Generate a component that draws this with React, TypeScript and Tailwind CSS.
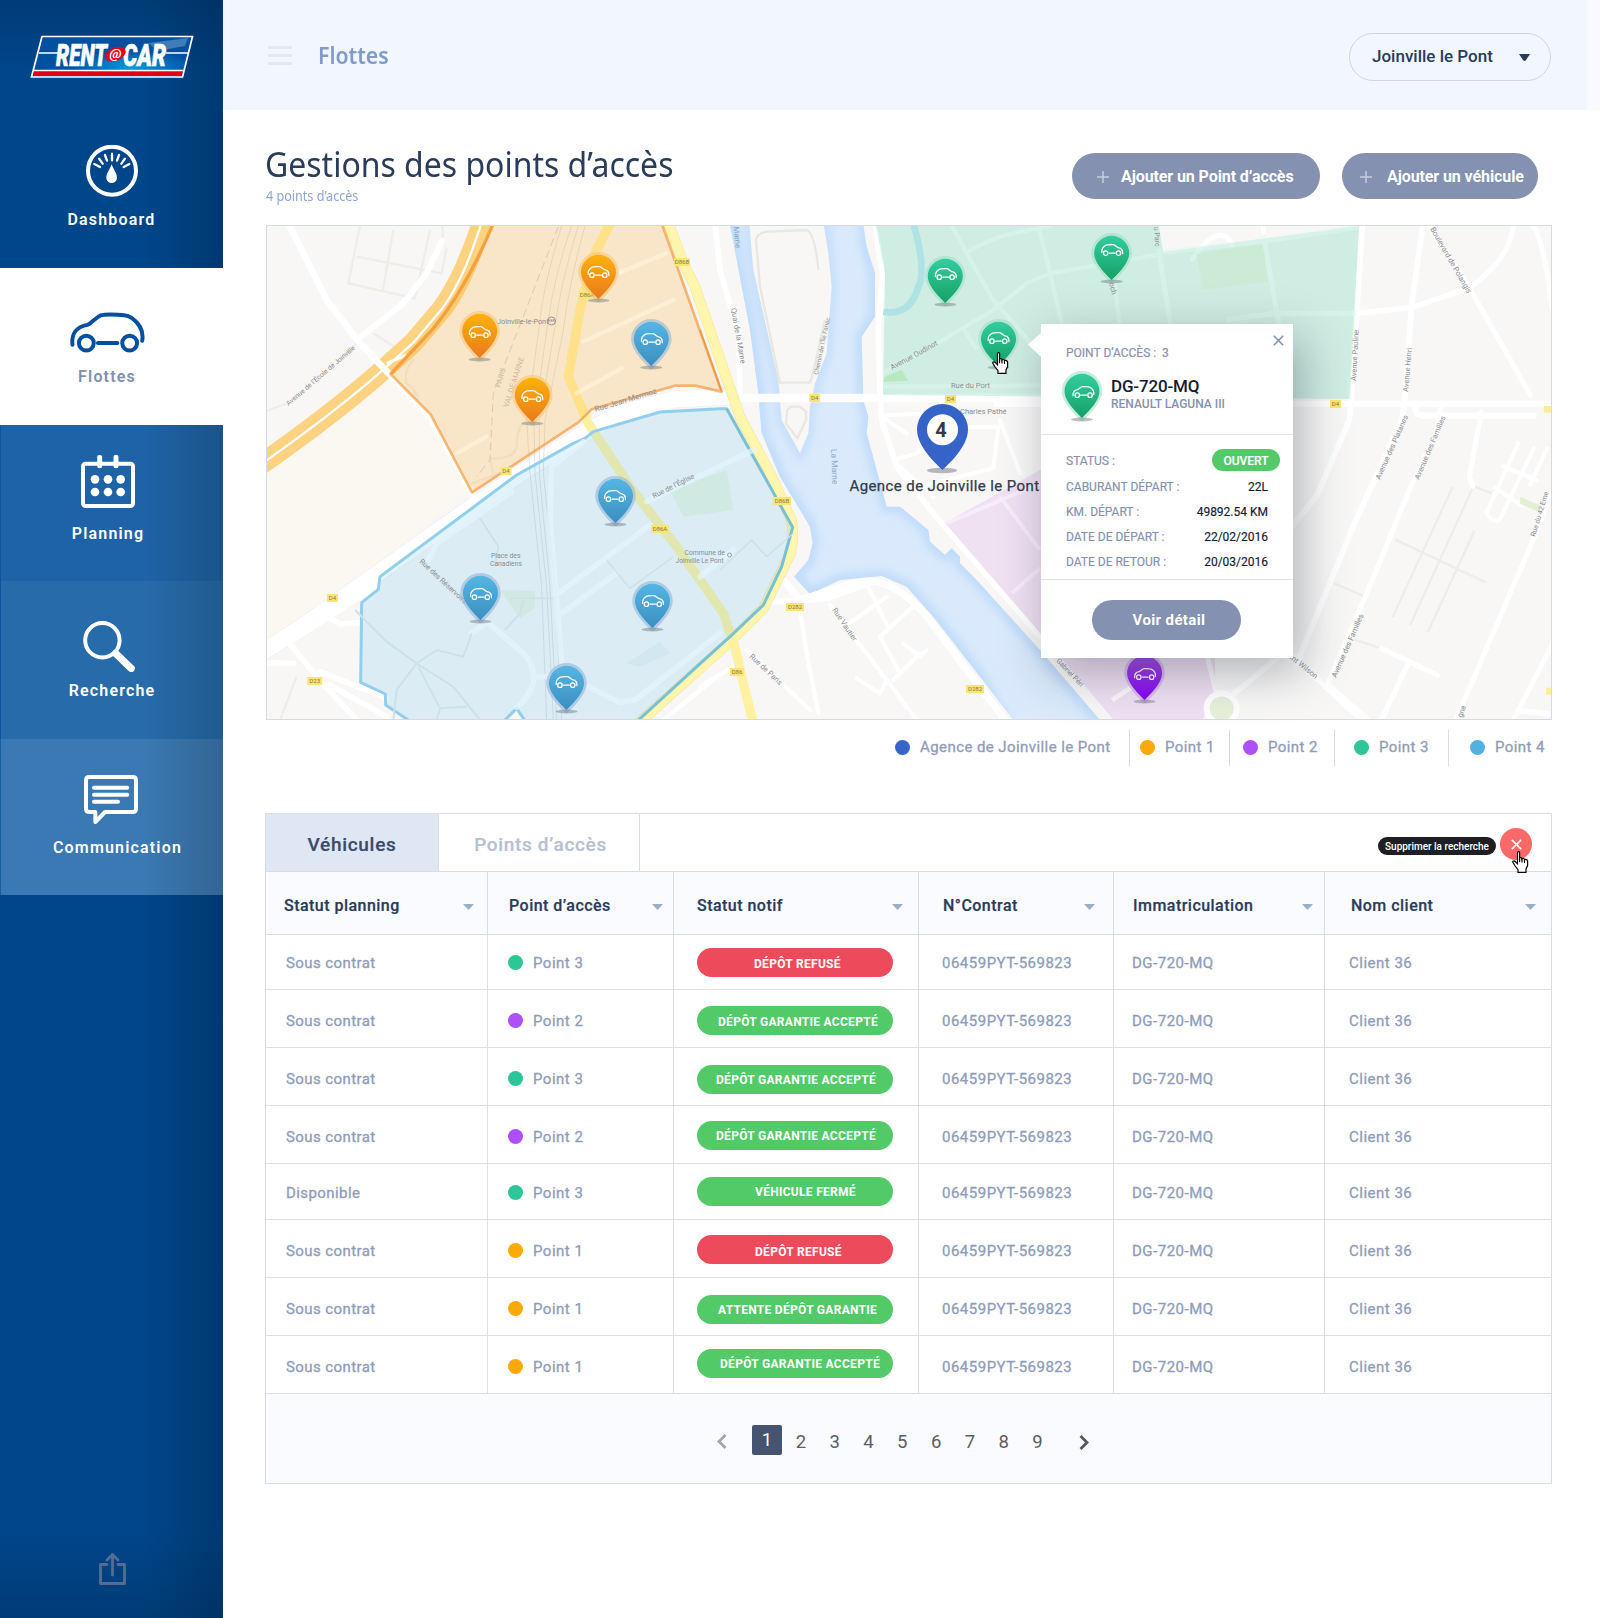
import type { ReactNode } from "react";

/* ---------- icons ---------- */

function CarShape({ color, width = 12 }: { color: string; width?: number }) {
  return (
    <g fill="none" stroke={color} strokeWidth={width} strokeLinecap="round" strokeLinejoin="round">
      <path d="M217 1033C214 1004 226 979 262 973Q268 971 273 966L294 949Q302 942 313 942Q350 941 374 944Q386 945 396 952C421 970 433 990 428 1021" />
      <circle cx="259" cy="1028" r="22.5" />
      <circle cx="390" cy="1028" r="22.5" />
      <path d="M294 1028H353" />
    </g>
  );
}

function Gauge() {
  return (
    <svg className="h-[52px] w-[52px]" viewBox="258 434 156 156" fill="none">
      <circle cx="336" cy="511" r="72" stroke="#fff" strokeWidth="12" />
      <g stroke="#fff" strokeWidth="7" strokeLinecap="round">
        <path d="M336 460v20M315 464l6 17M357 464l-6 17M297 475l11 15M375 475l-11 15M283 491l17 9M388 491l-17 9" />
      </g>
      <path d="M335 492C340 507 351 519 351 532A16 16 0 0 1 319 532C319 519 330 507 335 492Z" fill="#fff" />
    </svg>
  );
}

function Calendar() {
  return (
    <svg className="h-[53px] w-[54px]" viewBox="243 105 162 159" fill="none">
      <rect x="249" y="131" width="150" height="127" rx="8" stroke="#fff" strokeWidth="12" />
      <path d="M299 112V137M348 112V137" stroke="#fff" strokeWidth="15" strokeLinecap="round" />
      <g fill="#fff">
        <circle cx="285" cy="178" r="13" /><circle cx="324" cy="178" r="13" /><circle cx="362" cy="178" r="13" />
        <circle cx="285" cy="216" r="13" /><circle cx="324" cy="216" r="13" /><circle cx="362" cy="216" r="13" />
      </g>
    </svg>
  );
}

function Magnifier() {
  return (
    <svg className="mr-[6px] h-[51px] w-[52px]" viewBox="249 602 156 154" fill="none">
      <circle cx="307" cy="660" r="52" stroke="#fff" strokeWidth="12" />
      <path d="M347 700L394 745" stroke="#fff" strokeWidth="22" strokeLinecap="round" />
    </svg>
  );
}

function Message() {
  return (
    <svg className="mr-[14px] h-[49px] w-[54px]" viewBox="252 1065 162 147" fill="none" stroke="#fff" strokeWidth="12" strokeLinejoin="round" strokeLinecap="round">
      <path d="M268 1071H398Q408 1071 408 1081V1166Q408 1176 398 1176H315L286 1206V1176H268Q258 1176 258 1166V1081Q258 1071 268 1071Z" />
      <path d="M282 1103H382M282 1124H382M282 1145H354" />
    </svg>
  );
}

function Hand({ className }: { className: string }) {
  return (
    <svg className={className} viewBox="0 0 17 22">
      <path
        d="M5.5 1.5Q5.5 .6 6.5 .6T7.6 1.5V7.2Q8 6.4 9 6.6T10 8Q10.4 7.3 11.4 7.5T12.5 8.8Q12.9 8.2 13.9 8.4T15.6 10V14.5L14 18V21.3H6V18.6L2.8 14.5L.8 11.3Q.7 9.8 2 9.8Q3.2 10 4.2 11.3L5.5 12.7Z"
        fill="#fff" stroke="#000" strokeWidth="1.2"
      />
      <path d="M7.6 7V11.2M10 8V11.6M12.5 9V12" stroke="#000" strokeWidth="1.1" />
    </svg>
  );
}

function Logo() {
  return (
    <svg className="h-[44px] w-[165px]" viewBox="0 0 165 44">
      <defs>
        <radialGradient id="lg" cx=".62" cy=".75" r=".4">
          <stop offset="0" stopColor="#0a9ad8" />
          <stop offset="1" stopColor="#0050a0" />
        </radialGradient>
      </defs>
      <path d="M12 1.5H162.500L152.500 42H1.500Z" fill="url(#lg)" stroke="#fff" strokeWidth="1.7" />
      <path d="M118 8L158 3L155 11L128 16Z" fill="#fff" opacity=".25" />
      <path d="M4 36.500H152.700L151.500 41H3Z" fill="#e2001a" />
      <path d="M4 35.5H153.500" stroke="#fff" strokeWidth="1.300" />
      <path d="M9 18H29M136 18H158" stroke="#fff" strokeWidth="1.600" />
      <g fill="#fff" stroke="#fff" strokeWidth=".7" fontFamily="Roboto, sans-serif" fontWeight="900" fontStyle="italic" fontSize="32">
        <text x="26" y="31" textLength="51" lengthAdjust="spacingAndGlyphs">RENT</text>
        <text x="93" y="31" textLength="43" lengthAdjust="spacingAndGlyphs">CAR</text>
      </g>
      <ellipse cx="85.300" cy="19" rx="11" ry="6.500" fill="#e2001a" transform="rotate(-22 85.300 19)" />
      <text x="79.500" y="22.700" fill="#fff" fontFamily="Roboto, sans-serif" fontStyle="italic" fontWeight="700" fontSize="13" textLength="12" lengthAdjust="spacingAndGlyphs">@</text>
    </svg>
  );
}

/* ---------- map markers ---------- */

const PIN = "M0 44C-3.500 40.500-17.500 28-17.500 17.300A17.500 17.500 0 0 1 17.500 17.300C17.500 28 3.500 40.500 0 44Z";

const PIN_COLORS: Record<string, { fill: string; halo: string }> = {
  orange: { fill: "url(#pinOrange)", halo: "#f6c878" },
  blue: { fill: "url(#pinBlue)", halo: "#94b8dc" },
  green: { fill: "url(#pinGreen)", halo: "#9fe3c9" },
  purple: { fill: "url(#pinPurple)", halo: "#c9a4ea" },
};

function PinDefs() {
  const g = (id: string, a: string, b: string) => (
    <linearGradient id={id} x1="0" y1="0" x2="0" y2="1">
      <stop offset="0" stopColor={a} />
      <stop offset="1" stopColor={b} />
    </linearGradient>
  );
  return (
    <defs>
      {g("pinOrange", "#fdb10c", "#e97a1b")}
      {g("pinBlue", "#55b6e3", "#3b8fc0")}
      {g("pinGreen", "#33cda0", "#16a067")}
      {g("pinPurple", "#a24fe0", "#8500f5")}
    </defs>
  );
}

function Pin({ x, y, kind, dx = 0, dy = 17, flip = true }: { x: number; y: number; kind: string; dx?: number; dy?: number; flip?: boolean }) {
  const c = PIN_COLORS[kind];
  return (
    <g transform={`translate(${x} ${y})`}>
      <path d={PIN} fill={c.halo} stroke={c.halo} strokeWidth="5.500" strokeLinejoin="round" opacity=".6" />
      <ellipse cx="0" cy="45.500" rx="11" ry="1.900" fill="#6f7480" opacity=".45" />
      <path d={PIN} fill={c.fill} />
      <g transform={`translate(${dx} ${dy}) scale(${flip ? -0.098 : 0.098} .098) translate(-323 -996)`}>
        <CarShape color="#fff" width={13} />
      </g>
    </g>
  );
}

const PINS: { x: number; y: number; kind: string; dx?: number; dy?: number; flip?: boolean }[] = [
  { x: 598.5, y: 255, kind: "orange" },
  { x: 479.7, y: 314, kind: "orange", dy: 18 },
  { x: 532.3, y: 378, kind: "orange", dy: 18 },
  { x: 651.3, y: 322, kind: "blue", dx: 0.5 },
  { x: 615.5, y: 479, kind: "blue", dx: -0.5 },
  { x: 480.5, y: 576, kind: "blue", dx: 0.5, dy: 18 },
  { x: 652.5, y: 584, kind: "blue", dx: 0.5 },
  { x: 566.5, y: 666, kind: "blue", dy: 16 },
  { x: 945.3, y: 259, kind: "green", dx: 0.5, dy: 15 },
  { x: 998.5, y: 322, kind: "green", dy: 16 },
  { x: 1111.7, y: 236, kind: "green", dx: 0.5, dy: 14 },
  { x: 1144.6, y: 656, kind: "purple", dx: 0.5, dy: 18, flip: false },
];

/* ---------- map ---------- */

const WEST = "translate(260 220) scale(.33333)";
const CENTER = "translate(700 220) scale(.33333)";
const EAST = "translate(1030 220) scale(.338 .357)";

function Shield({ x, y, children, w = 16 }: { x: number; y: number; children: string; w?: number }) {
  return (
    <g>
      <rect x={x - w / 2} y={y - 4} width={w} height="8" fill="#fbe572" />
      <text x={x} y={y + 2.3} textAnchor="middle" fontSize="6" fill="#857a4c">{children}</text>
    </g>
  );
}

function Label({ x, y, r = 0, size = 8, color = "#8b8d90", children }: { x: number; y: number; r?: number; size?: number; color?: string; children: string }) {
  return (
    <text x={x} y={y} fontSize={size} fill={color} transform={`rotate(${r} ${x} ${y})`}>{children}</text>
  );
}

function MapCanvas() {
  return (
    <svg className="block h-full w-full" viewBox="267 226 1284 493" fontFamily="Roboto, sans-serif" fill="none">
      <PinDefs />
      <defs>
        <filter id="soft" x="-10%" y="-10%" width="120%" height="120%">
          <feGaussianBlur stdDeviation="14" />
        </filter>
        <clipPath id="riverClip">
          <path d="M90 16L110 120L150 330L175 520L185 640L240 770L330 920L338 970L325 1020L282 1070L330 1122L420 1080L545 1068L620 1100L700 1190L840 1370L940 1500H1200L1020 1290L830 1080L780 1030V1010L755 985L735 1005L690 965L685 930L600 860H560L500 640L505 590L490 540L485 350L525 290V160L500 80L490 16Z" />
        </clipPath>
      </defs>
      <rect x="267" y="226" width="1284" height="493" fill="#f8f7f6" />
      <path d="M267 470L400 375L470 490L330 600L267 640Z" fill="#fbf8f2" />

      {/* river */}
      <g transform={CENTER}>
        <path d="M90 16L110 120L150 330L175 520L185 640L240 770L330 920L338 970L325 1020L282 1070L330 1122L420 1080L545 1068L620 1100L700 1190L840 1370L940 1500H1200L1020 1290L830 1080L780 1030V1010L755 985L735 1005L690 965L685 930L600 860H560L500 640L505 590L490 540L485 350L525 290V160L500 80L490 16Z" fill="#daeafc" />
        <g clipPath="url(#riverClip)">
          <path d="M90 -40L110 120L150 330L175 520L185 640L240 770L330 920L338 970L325 1020L282 1070L330 1122L420 1080L545 1068L620 1100L700 1190L840 1370L940 1560H1250L1020 1290L830 1080L780 1030V1010L755 985L735 1005L690 965L685 930L600 860H560L500 640L505 590L490 540L485 350L525 290V160L500 80L490 -40Z" stroke="#bedafa" strokeWidth="34" filter="url(#soft)" />
          <path d="M148 -40L160 150L185 260L235 480L245 600L300 700L325 640L330 560L345 490L380 400L385 330L395 200L385 100L370 -40" stroke="#c4defa" strokeWidth="30" filter="url(#soft)" />
        </g>
        <path d="M148 10L160 150L185 260L235 480L245 600L300 700L325 640L330 560L345 490L380 400L385 330L395 200L385 100L370 10Z" fill="#f8f7f5" />
        <path d="M168 60L180 200L240 488H330L340 455L375 300M168 60Q170 40 200 35L320 30Q345 40 355 150M262 570L258 610L292 655L318 600V575L300 560H272Z" stroke="#e9e7e1" strokeWidth="7" />
      </g>

      {/* narrow grey paths */}
      <g stroke="#eeede8" strokeWidth="7">
        <g transform={WEST}>
          <path d="M300 16L265 190L465 235L510 30M290 110L545 160L560 85M400 30L368 215M548 16V60M20 573L80 550M260 400L290 370M340 340L440 405M110 1370L60 1500" />
          <path d="M440 405L460 420Q430 450 440 490Q470 510 475 540M800 600Q770 620 770 680Q760 720 690 715L700 760M635 790L720 760" />
        </g>
        <g transform={EAST}>
          <path d="M1250 748L1073 1112M1310 750L1125 1134M1315 870L1177 1155M1080 895L1348 1015M900 1018L985 1052M958 1175L1040 1200M1310 745L1365 765" />
        </g>
      </g>

      {/* white roads */}
      <g stroke="#fff" strokeLinecap="round" strokeLinejoin="round">
        <g transform={WEST}>
          <path d="M10 1295L120 1225L640 858L800 748L960 648L1080 580L1240 538L1400 530" stroke="#f3f1ee" strokeWidth="54" />
          <path d="M10 1295L120 1225L640 858L800 748L960 648L1080 580L1240 538L1400 530" strokeWidth="49" />
          <path d="M85 10L200 240L300 370L510 590L636 820" strokeWidth="20" />
          <path d="M546 62L500 160L430 250L300 352" strokeWidth="18" />
          <path d="M0 1328L100 1330M80 1260L170 1370L290 1500M100 1260L345 1100M200 1190L240 1212L300 1207M180 1355L380 1435M210 1395L380 1490" strokeWidth="17" />
          <path d="M1370 1370L1210 1500" strokeWidth="14" />
        </g>
        <g transform={CENTER}>
          <path d="M45 10L60 150L115 340L120 520" strokeWidth="17" />
          <path d="M80 534H1030" strokeWidth="26" />
          <path d="M525 16L548 160L535 330L540 520L545 600L590 740L700 880L1020 1250" strokeWidth="17" />
          <path d="M250 1080L300 1140L460 1090Q530 1070 590 1110Q660 1150 740 1270L915 1500" strokeWidth="22" />
          <path d="M200 1145L300 1142L380 1135L520 1085" strokeWidth="18" />
          <path d="M300 1170L320 1300L355 1480M390 1155L560 1380L650 1500M140 1290L330 1470M0 1400L100 1340M560 1130L440 1215M500 1090L560 1215M650 1150L540 1250L600 1360M580 1380L660 1300" strokeWidth="13" />
          <path d="M545 620L560 585L720 580M580 720L650 700L740 600M660 800L880 745L895 620H800M600 740L700 830M900 600L960 760M560 600L620 640" strokeWidth="12" />
          <path d="M470 1375L540 1420L560 1380M610 1270L660 1310L680 1290" strokeWidth="12" />
        </g>
        <g transform={EAST}>
          <path d="M-100 515H1545M1140 530Q1140 548 1170 548H1490" strokeWidth="18" />
          <path d="M983 16L960 350L950 510L945 560L850 770L740 900" strokeWidth="17" />
          <path d="M1162 16L1130 230L1108 510L1100 560L960 850L790 1240" strokeWidth="17" />
          <path d="M1215 530L1200 600L1130 740L990 1060L880 1300M1180 16L1300 190L1480 490M1430 16Q1420 110 1300 190L1130 245L960 262M1490 16Q1520 60 1545 250" strokeWidth="15" />
          <path d="M1335 540L1300 720L1310 745M1545 760L1500 870L1260 1400M740 1190L980 1400M880 1300L1000 1400M1120 1240L1040 1400M1040 1200L1205 1275M1545 1190L1430 1400M1450 1375L1545 1385" strokeWidth="15" />
          <path d="M740 1220L600 1330" strokeWidth="16" />
          <path d="M1445 625L1350 820Q1370 850 1390 840L1490 640M1400 690L1500 730M1375 750L1455 800M1530 640L1480 740" strokeWidth="12" />
          <path d="M480 110Q560 0 600 70M690 16V40" strokeWidth="14" />
        </g>
      </g>
      <g transform={EAST}>
        <path d="M1450 775L1510 800L1500 815L1450 795Z" fill="#e3f0d3" />
        <path d="M1520 530H1545M1536 1310V1330" stroke="#fdec9a" strokeWidth="18" />
      </g>

      {/* railway */}
      <g transform={WEST} stroke="#dcdcd8" strokeWidth="2.500">
        <path d="M905 16Q850 200 840 300L800 600L810 760L845 1100L860 1500M935 16Q880 180 865 300L822 600L825 760L860 1100L880 1500M955 16Q900 200 885 320L838 600V760L870 1100L890 1500M975 16Q925 200 910 330L855 600L850 760L885 1100L905 1500" />
        <path d="M895 20L700 520L690 720L650 770" stroke="#cbc9c4" strokeDasharray="24 14" />
      </g>

      {/* motorway and departmental roads */}
      <g transform={WEST} strokeLinejoin="round">
        <path d="M0 735C150 630 290 520 380 440L460 368L545 268C610 180 640 80 672 0" stroke="#fdd281" strokeWidth="62" />
        <path d="M0 735C150 630 290 520 380 440L460 368L545 268C610 180 640 80 668 0" stroke="#fff" strokeWidth="7" />
        <path d="M200 240L300 370L510 590" stroke="#fff" strokeWidth="20" />
        <path d="M440 405L380 430" stroke="#fff" strokeWidth="9" />
        <path d="M1222 0L1270 130L1305 200L1410 505L1440 590L1535 770L1594 900Q1604 940 1592 1000L1510 1165L1410 1265L1135 1510" stroke="#f5e79b" strokeWidth="32" />
        <path d="M1222 0L1270 130L1305 200L1410 505L1440 590L1535 770L1594 900Q1604 940 1592 1000L1510 1165L1410 1265L1135 1510" stroke="#fff5ad" strokeWidth="28" />
        <path d="M1055 0L1000 110L960 270L925 470L985 610L1110 800L1250 980L1390 1180L1425 1280L1450 1390L1480 1510" stroke="#fff1a0" strokeWidth="28" />
      </g>

      {/* orange zone */}
      <g transform={WEST}>
        <path d="M700 10C650 130 590 240 520 325L392 462L512 583L636 817L955 607L995 568L1245 497H1305L1385 515L1205 10Z" fill="#fbb64a" fillOpacity=".27" stroke="#f4a04c" strokeOpacity=".75" strokeWidth="8" strokeLinejoin="round" />
        <path d="M700 10C650 130 590 240 520 325L392 462" stroke="#f29b33" strokeOpacity=".7" strokeWidth="10" />
        <g stroke="#fff3dd" strokeOpacity=".6" strokeWidth="14" strokeLinecap="round">
          <path d="M1060 165L1220 100M970 365L1240 240M950 520L1085 445M590 700L680 650" />
        </g>
        <path d="M1385 515L1320 330" stroke="#ef9a42" strokeWidth="5" />
      </g>

      {/* blue zone */}
      <g transform={WEST}>
        <path d="M1400 566H1380L1200 576L1000 635L975 655L940 670L770 765L360 1070L355 1108L305 1148L302 1387L376 1422L377 1455L460 1510H725L770 1465L800 1510H1125L1320 1330L1410 1250L1510 1155L1565 1040L1598 922Z" fill="#5fc0ee" fillOpacity=".19" stroke="#92cfec" strokeWidth="9" strokeLinejoin="round" />
        <path d="M1400 566L1598 922L1565 1040L1510 1155L1410 1250L1130 1505" stroke="#6db9c0" strokeOpacity=".65" strokeWidth="8" />
        <path d="M720 1110L825 1113V1165L780 1195Z M1230 810L1400 750L1420 870L1270 890Z" fill="#c9e8d6" fillOpacity=".55" />
        <g stroke="#e6f5fd" strokeOpacity=".7" strokeWidth="17" strokeLinecap="round">
          <path d="M755 815L530 970L505 1020M970 665L875 740L870 900L905 1325M895 1120L1170 915M1160 845L1480 690M635 1240L680 1205L790 1300Q820 1330 822 1380Q810 1430 770 1462M835 1370H870M985 1400L1080 1448L1125 1440L1380 1240M905 1180L1070 1060M1320 1070L1420 990" />
        </g>
        <g stroke="#cde1e7" strokeWidth="6">
          <path d="M660 895L715 980L705 1040M285 1170L380 1265L470 1330L580 1400L660 1500M470 1330L530 1290L610 1310L635 1240M470 1330L410 1410L400 1500M540 1465L530 1500M540 1465L620 1460M540 1465L475 1340M750 1135H880M790 1140L780 1180L735 1230" />
          <path d="M1040 1020L1110 1105L1240 1010M1380 1050L1475 960L1520 1010L1600 940" strokeWidth="4" />
        </g>
        <path d="M1100 1330L1200 1265L1230 1300L1140 1340Z" fill="#d2e7f0" />
      </g>

      {/* green zone */}
      <path d="M875 220L885 273L883 395L1350 399L1359 226L1163 252L1158 220Z" fill="#3fcf9f" fillOpacity=".22" />
      <g transform={CENTER}>
        <path d="M640 10Q680 150 655 200Q630 290 550 275" stroke="#aee2e4" strokeWidth="20" />
        <path d="M555 470L605 450L625 482L550 485Z" fill="#b8e8be" />
        <g stroke="#e0f9ef" strokeOpacity=".5" strokeWidth="13">
          <path d="M548 460L720 365L880 270L980 190L1050 160L1370 105M755 16L800 100L880 240L1010 390M795 100Q880 50 940 40L1060 16M1015 16L1050 160L1085 310M550 500L1030 496M1190 100L1240 150L1258 310M790 325L830 390" />
        </g>
      </g>
      <g transform={EAST}>
        <path d="M492 95L690 65L705 172L512 195Z" fill="#c5e8c8" fillOpacity=".45" />
        <g stroke="#e0f9ef" strokeOpacity=".5" strokeWidth="15">
          <path d="M395 90L690 60L970 20M690 40L730 260L740 300M380 80L415 290M580 280L720 262H965" />
        </g>
      </g>

      {/* purple zone */}
      <path d="M945 523L1040 470L1215 640V690L1203 719H1113L1040 633Z" fill="#b95fe0" fillOpacity=".15" />
      <g transform={CENTER} stroke="#faf1fd" strokeOpacity=".7" strokeWidth="12">
        <path d="M735 912L1020 790M900 830L1020 990M935 1120L1020 1045" />
      </g>
      <path d="M1207 655L1216 692M1112 700L1135 685" stroke="#fbf7fd" strokeWidth="5" />
      <circle cx="1221.700" cy="708.500" r="15" fill="#e7f0da" stroke="#fff" strokeWidth="6" />

      <Shield x={682} y={262} w={16}>D86B</Shield>
      <Shield x={587} y={295} w={16}>D86A</Shield>
      <Shield x={506} y={471} w={11}>D4</Shield>
      <Shield x={332.500} y={598} w={11}>D4</Shield>
      <Shield x={314.700} y={681} w={15}>D23</Shield>
      <Shield x={660} y={529} w={18}>D86A</Shield>
      <Shield x={782} y={501} w={18}>D86B</Shield>
      <Shield x={814.700} y={398} w={11}>D4</Shield>
      <Shield x={950.500} y={399} w={11}>D4</Shield>
      <Shield x={1335.500} y={404} w={11}>D4</Shield>
      <Shield x={795} y={607} w={18}>D282</Shield>
      <Shield x={737} y={672} w={14}>D86</Shield>
      <Shield x={975} y={689} w={18}>D282</Shield>

      <Label x={288.500} y={406} r={-40.500} size={6.800}>Avenue de l’École de Joinville</Label>
      <Label x={497} y={323.500} size={7.300}>Joinville-le-Pont</Label>
      <circle cx="551.500" cy="321" r="4" stroke="#9b8f93" />
      <text x="551.500" y="322.300" textAnchor="middle" fontSize="3.500" fill="#8b7a80">RER</text>
      <Label x={500} y={388} r={-73} size={7.500} color="#cdbd9e">PARIS</Label>
      <Label x={508} y={408} r={-72} size={7.500} color="#cdbd9e">VAL-DE-MARNE</Label>
      <Label x={595.500} y={412} r={-17} size={8}>Rue Jean Mermoz</Label>
      <Label x={654} y={498.500} r={-27} size={7.200}>Rue de l’Église</Label>
      <Label x={419} y={562} r={43} size={7.300}>Rue des Réservoirs</Label>
      <Label x={491} y={558} size={6.800}>Place des</Label>
      <Label x={490} y={565.800} size={6.800}>Canadiens</Label>
      <Label x={684.500} y={554.500} size={6.800}>Commune de</Label>
      <Label x={675.500} y={562.500} size={6.600}>Joinville Le Pont</Label>
      <circle cx="729.500" cy="555" r="2" stroke="#8b8d90" strokeWidth=".8" />
      <Label x={733.500} y={227} r={84} size={7.500} color="#84a0bd">Marne</Label>
      <Label x={731} y={308.500} r={80} size={7.500}>Quai de la Marne</Label>
      <Label x={818} y={375} r={-78} size={6.200}>Chemin de l’Île Fanac</Label>
      <Label x={831} y={449} r={88} size={8.500} color="#8dabca">La Marne</Label>
      <Label x={892} y={370} r={-28.500} size={7.500}>Avenue Oudinot</Label>
      <Label x={951} y={388} size={7.500}>Rue du Port</Label>
      <Label x={960} y={414} size={7.500}>Charles Pathé</Label>
      <Label x={832} y={610} r={56} size={7.500}>Rue Vautier</Label>
      <Label x={749} y={657} r={43} size={7.500}>Rue de Paris</Label>
      <Label x={1056} y={661} r={47} size={7}>Gabriel Péri</Label>
      <Label x={1154} y={227} r={86} size={7}>u Parc</Label>
      <Label x={1109} y={283} r={75} size={7.500}>och</Label>
      <Label x={1430} y={229} r={60} size={7.600}>Boulevard de Polangis</Label>
      <Label x={1356} y={381} r={-87} size={7.500}>Avenue Pauline</Label>
      <Label x={1408} y={392} r={-85} size={7.500}>Avenue Henri</Label>
      <Label x={1380} y={480} r={-66} size={7.500}>Avenue des Platanes</Label>
      <Label x={1419} y={480} r={-67} size={7.500}>Avenue des Familles</Label>
      <Label x={1336} y={678} r={-66} size={7.500}>Avenue des Familles</Label>
      <Label x={1535} y={537} r={-73} size={7}>Rue du 42 Eme</Label>
      <Label x={1288} y={657} r={39} size={7.500}>ent Wilson</Label>
      <Label x={1462} y={718} r={-70} size={7.500}>gne</Label>

      {PINS.map((p) => (
        <Pin key={`${p.x}-${p.y}`} {...p} />
      ))}

      {/* agency marker */}
      <g>
        <ellipse cx="942" cy="470.500" rx="15" ry="2.700" fill="#7d828c" opacity=".55" />
        <path d="M942.500 470C937 464.500 917 447 917 429.500A25.500 25.500 0 0 1 968 429.500C968 447 948 464.500 942.500 470Z" fill="#3663c8" />
        <circle cx="942.500" cy="429.700" r="15.500" fill="#fff" />
        <text x="941" y="436.500" textAnchor="middle" fontSize="20" fontWeight="700" fill="#343a45">4</text>
        <text x="849.500" y="491" fontSize="15" letterSpacing=".4" fill="#333a48" stroke="#333a48" strokeWidth=".25">Agence de Joinville le Pont</text>
      </g>
    </svg>
  );
}

function Detail({ label, value, className }: { label: string; value: ReactNode; className: string }) {
  return (
    <div className={`flex items-center justify-between pl-[25px] text-[12px] leading-4 ${className}`}>
      <span className="whitespace-pre text-[#8491b0] [-webkit-text-stroke:0.15px]">{label}</span>
      <span className="text-[#131b33] [-webkit-text-stroke:0.15px]">{value}</span>
    </div>
  );
}

function VehiclePopup() {
  return (
    <div className="absolute left-[774px] top-[98px] h-[334px] w-[252px] bg-white shadow-[8px_14px_44px_rgba(30,40,60,0.34)]">
      <svg className="absolute -left-[13px] top-[9px] h-6 w-[13px]" viewBox="0 0 13 24">
        <path d="M13 0L0 11.500L13 24Z" fill="#fff" />
      </svg>
      <svg className="absolute right-[9px] top-[11px] h-[11px] w-[11px]" viewBox="0 0 11 11">
        <path d="M.8 .8L10.200 10.200M10.200 .8L.8 10.200" stroke="#8491b0" strokeWidth="1.600" />
      </svg>
      <div className="h-[111px] border-b border-[#e3e5ec] pl-[25px] pt-[21px]">
        <p className="whitespace-pre text-[12px] leading-4 text-[#8491b0] [-webkit-text-stroke:0.15px]">POINT D’ACCÈS :  3</p>
        <div className="-ml-[6px] mt-[9px] flex">
          <svg className="h-[52px] w-11" viewBox="-22 -4 44 52">
            <Pin x={0} y={0} kind="green" dx={1.500} dy={18} flip={false} />
          </svg>
          <div className="ml-[7px] pt-[6px]">
            <h3 className="text-[17px] font-medium leading-[21px] tracking-[-0.16px] text-[#131b33]">DG-720-MQ</h3>
            <p className="text-[12px] font-medium leading-[14px] text-[#8491b0]">RENAULT LAGUNA III</p>
          </div>
        </div>
      </div>
      <div className="h-[145px] border-b border-[#dfe1e8] pt-[14px]">
        <Detail
          className="h-[24px] pr-[13px]"
          label="STATUS :"
          value={<span className="mb-[2px] flex h-[22px] w-[68px] items-center justify-center rounded-full bg-[#52ca68] pt-px font-medium text-white">OUVERT</span>}
        />
        <Detail className="mt-[6px] pr-[25px]" label="CABURANT DÉPART :" value="22L" />
        <Detail className="mt-[9px] pr-[25px]" label="KM. DÉPART :" value="49892.54 KM" />
        <Detail className="mt-[9px] pr-[25px]" label="DATE DE DÉPART :" value="22/02/2016" />
        <Detail className="mt-[9px] pr-[25px]" label="DATE DE RETOUR :" value="20/03/2016" />
      </div>
      <button className="ml-[51px] mt-5 flex h-10 w-[149px] items-center justify-center rounded-full bg-[#8491b0] pl-[5px] text-[15px] font-bold tracking-[0.38px] text-white">
        Voir détail
      </button>
    </div>
  );
}

/* ---------- sidebar ---------- */

function NavItem({ className, label, children }: { className: string; label: string; children: ReactNode }) {
  return (
    <a className={`flex flex-col items-center justify-end text-[16px] font-semibold leading-5 tracking-[1.17px] ${className}`}>
      {children}
      <span>{label}</span>
    </a>
  );
}

function Sidebar() {
  return (
    <aside className="flex h-[1618px] w-[223px] shrink-0 flex-col bg-[#00468b] bg-[linear-gradient(180deg,rgba(0,35,70,0.3),rgba(0,35,70,0)_70px,rgba(0,35,70,0)_1530px,rgba(0,35,70,0.3)),linear-gradient(90deg,rgba(0,35,70,0)_65%,rgba(0,35,70,0.38))]">
      <div className="h-[110px] pl-[30px] pt-[35px]">
        <Logo />
      </div>
      <NavItem className="h-[158px] pb-[38px] text-white" label="Dashboard">
        <span className="mb-[13px]"><Gauge /></span>
      </NavItem>
      <NavItem className="h-[157px] bg-white pb-[38px] pr-[9px] text-[#8290ae]" label="Flottes">
        <svg className="mb-[14px] h-[41px] w-[77px]" viewBox="208 934 230 124">
          <CarShape color="#0350a2" />
        </svg>
      </NavItem>
      <NavItem className="h-[156px] border-l border-[#0f559b] bg-[#1e63a7] bg-[linear-gradient(90deg,rgba(20,60,90,0)_65%,rgba(20,60,90,0.4))] pb-[37px] pr-[8px] text-white" label="Planning">
        <span className="mb-[16px]"><Calendar /></span>
      </NavItem>
      <NavItem className="h-[158px] border-l border-[#0f559b] bg-[#276baa] bg-[linear-gradient(90deg,rgba(20,60,90,0)_65%,rgba(20,60,90,0.35))] pb-[38px] text-white" label="Recherche">
        <span className="mb-[9px]"><Magnifier /></span>
      </NavItem>
      <NavItem className="h-[156px] border-l border-[#1a5fa3] bg-[#3a79b3] bg-[linear-gradient(90deg,rgba(40,70,100,0)_65%,rgba(40,70,100,0.4))] pb-[37px] pl-[11px] text-white" label="Communication">
        <span className="mb-[14px]"><Message /></span>
      </NavItem>
      <div className="flex flex-1 items-end justify-center pb-[33px] pl-[2px]">
        <svg className="h-8 w-[27px]" viewBox="0 0 27 32" fill="none" stroke="#566c93" strokeWidth="2.800" strokeLinejoin="round" strokeLinecap="round">
          <path d="M8 11.500H1.500V30.500H25.500V11.500H19M13.500 22V2M8 7L13.500 1.500L19 7" />
        </svg>
      </div>
    </aside>
  );
}

/* ---------- table ---------- */

const GRID = "grid grid-cols-[222px_186px_245px_195px_211px_226px]";

const HEADERS = [
  { label: "Statut planning", className: "border-r pl-[18px] pr-[13px]" },
  { label: "Point d’accès", className: "border-r pl-[21px] pr-[10px]" },
  { label: "Statut notif", className: "border-r pl-[23px] pr-[15px]" },
  { label: "N°Contrat", className: "border-r pl-[24px] pr-[18px]" },
  { label: "Immatriculation", className: "border-r pl-[19px] pr-[11px]" },
  { label: "Nom client", className: "pl-[26px] pr-[15px]" },
];

const POINT_COLORS: Record<string, string> = {
  "Point 1": "bg-[#fda90a]",
  "Point 2": "bg-[#ae50fa]",
  "Point 3": "bg-[#2ec598]",
  "Point 4": "bg-[#52b1e0]",
};

const ROWS = [
  { status: "Sous contrat", point: "Point 3", notif: "DÉPÔT REFUSÉ", height: "h-[55px]", pill: "mb-[12px] bg-[#ed4a5b] pl-[57px] pb-[5px]" },
  { status: "Sous contrat", point: "Point 2", notif: "DÉPÔT GARANTIE ACCEPTÉ", height: "h-[58px]", pill: "mb-[12px] bg-[#52ca68] pl-[21px] pb-[5px]" },
  { status: "Sous contrat", point: "Point 3", notif: "DÉPÔT GARANTIE ACCEPTÉ", height: "h-[58px]", pill: "mb-[11px] bg-[#52ca68] pl-[19px] pb-[6px]" },
  { status: "Sous contrat", point: "Point 2", notif: "DÉPÔT GARANTIE ACCEPTÉ", height: "h-[58px]", pill: "mb-[13px] bg-[#52ca68] pl-[19px] pb-[6px]" },
  { status: "Disponible", point: "Point 3", notif: "VÉHICULE FERMÉ", height: "h-[56px]", pill: "mb-[13px] bg-[#52ca68] pl-[58px] pb-[6px]" },
  { status: "Sous contrat", point: "Point 1", notif: "DÉPÔT REFUSÉ", height: "h-[58px]", pill: "mb-[13px] bg-[#ed4a5b] pl-[58px] pb-[4px]" },
  { status: "Sous contrat", point: "Point 1", notif: "ATTENTE DÉPÔT GARANTIE", height: "h-[58px]", pill: "mb-[11px] bg-[#52ca68] pl-[21px] pb-[6px]" },
  { status: "Sous contrat", point: "Point 1", notif: "DÉPÔT GARANTIE ACCEPTÉ", height: "h-[58px]", pill: "mb-[15px] bg-[#52ca68] pl-[23px] pb-[6px]" },
];

function VehicleTable() {
  return (
    <section className="mt-[47px] w-[1287px] border border-[#d7dce6]">
      <div className="flex h-[58px] border-b border-[#d7dce6] text-[19px] font-medium [-webkit-text-stroke:0.2px]">
        <button className="w-[173px] border-r border-[#d7dce6] bg-[#dfe6f4] pt-[5px] text-center tracking-[0.7px] text-[#3a4a6b]">Véhicules</button>
        <button className="w-[201px] border-r border-[#d7dce6] pl-[3px] pt-[5px] text-center tracking-[0.66px] text-[#b8bfd2]">Points d’accès</button>
        <div className="flex flex-1 items-center justify-end pr-[19px]">
          <span className="mr-1 mt-[7px] flex h-[18px] w-[118px] items-center justify-center rounded-full bg-[#1d1f24] text-[10px] text-white [-webkit-text-stroke:0px]">Supprimer la recherche</span>
          <button className="relative mt-[3px] flex h-8 w-8 items-center justify-center rounded-full bg-[#fb6868]">
            <svg className="h-[11px] w-[11px]" viewBox="0 0 11 11">
              <path d="M.8 .8L10.200 10.200M10.200 .8L.8 10.200" stroke="#fff" strokeWidth="1.700" />
            </svg>
            <Hand className="absolute left-[12px] top-[23px] h-[22px] w-[17px]" />
          </button>
        </div>
      </div>

      <div className={`${GRID} h-[63px] border-b border-[#d7dce6] bg-[#fafbff] text-[16px] font-medium tracking-[0.47px] text-[#2a3b5c] [-webkit-text-stroke:0.2px]`}>
        {HEADERS.map((h) => (
          <div key={h.label} className={`flex items-center justify-between border-[#d7dce6] pt-[5px] ${h.className}`}>
            {h.label}
            <svg className="mt-[3px] h-[6px] w-[11px]" viewBox="0 0 11 6">
              <path d="M0 0H11L5.500 6Z" fill="#9ab0c8" />
            </svg>
          </div>
        ))}
      </div>

      {ROWS.map((r, i) => (
        <div key={i} className={`${GRID} ${r.height} border-b border-[#dadfe8] text-[15px] leading-5 tracking-[0.5px] text-[#8f9cba] [-webkit-text-stroke:0.3px]`}>
          <div className="flex items-end border-r border-[#dadfe8] pb-4 pl-5 tracking-[0.42px]">{r.status}</div>
          <div className="flex items-end border-r border-[#dadfe8] pb-4 pl-5">
            <span className={`mb-[3px] mr-[10px] h-[15px] w-[15px] rounded-full ${POINT_COLORS[r.point]}`} />
            {r.point}
          </div>
          <div className="flex items-end border-r border-[#dadfe8] pl-[23px]">
            <span className={`flex h-[29px] w-[196px] items-end whitespace-nowrap rounded-full text-[12px] font-bold leading-4 tracking-[0.29px] text-white [-webkit-text-stroke:0px] ${r.pill}`}>{r.notif}</span>
          </div>
          <div className="flex items-end border-r border-[#dadfe8] pb-4 pl-[23px]">06459PYT-569823</div>
          <div className="flex items-end border-r border-[#dadfe8] pb-4 pl-[18px]">DG-720-MQ</div>
          <div className="flex items-end pb-4 pl-6">Client 36</div>
        </div>
      ))}

      <div className="flex h-[89px] items-center bg-[#fafbff] pl-[451px] pt-[3px] text-[18.5px] text-[#5b5d63]">
        <svg className="mr-[25px] mt-[3px] h-[15px] w-[10px]" viewBox="0 0 10 15" fill="none">
          <path d="M8.500 1L2 7.500L8.500 14" stroke="#a3a5aa" strokeWidth="2.800" />
        </svg>
        <span className="mr-[2px] flex h-[30px] w-[30px] items-center justify-center rounded-[2px] bg-[#445471] pt-px text-white">1</span>
        {[2, 3, 4, 5, 6, 7, 8, 9].map((n) => (
          <span key={n} className="w-[33.8px] pt-[6px] text-center">{n}</span>
        ))}
        <svg className="ml-[25px] mt-[5px] h-[15px] w-[10px]" viewBox="0 0 10 15" fill="none">
          <path d="M1.500 1L8 7.500L1.500 14" stroke="#55575c" strokeWidth="2.800" />
        </svg>
      </div>
    </section>
  );
}

/* ---------- legend ---------- */

const LEGEND = [
  { label: "Agence de Joinville le Pont", dot: "bg-[#3764c9]", className: "w-[235px] border-r" },
  { label: "Point 1", dot: "bg-[#fda90a]", className: "w-[100px] border-r pl-[10px]" },
  { label: "Point 2", dot: "bg-[#ae50fa]", className: "w-[105px] border-r pl-[13px]" },
  { label: "Point 3", dot: "bg-[#2ec598]", className: "w-[114px] border-r pl-[19px]" },
  { label: "Point 4", dot: "bg-[#52b1e0]", className: "w-[103px] pl-[21px]" },
];

function Plus() {
  return (
    <svg className="h-3 w-3" viewBox="0 0 12 12">
      <path d="M6 0V12M0 6H12" stroke="#c7cddc" strokeWidth="1.500" />
    </svg>
  );
}

export default function App() {
  return (
    <div className="flex h-[1618px] w-[1600px] overflow-hidden bg-white font-['Roboto',sans-serif]">
      <Sidebar />
      <main className="flex flex-1 flex-col">
        <header className="flex h-[110px]">
          <div className="flex w-[1364px] items-center bg-[#f2f6ff] pl-[45px]">
            <div className="flex h-[19px] w-6 flex-col justify-between">
              <span className="h-[3px] bg-[#e4e9f4]" />
              <span className="h-[3px] bg-[#e4e9f4]" />
              <span className="h-[3px] bg-[#e4e9f4]" />
            </div>
            <h2 className="ml-[26px] origin-left scale-x-[0.925] font-['Noto_Sans',sans-serif] text-[23px] font-semibold text-[#809aca]">Flottes</h2>
            <button className="ml-auto mr-[36px] mt-[4px] flex h-[48px] w-[202px] items-center justify-between rounded-full border border-[#cfd5e6] pl-[22px] pr-[20px] text-[17px] font-medium text-[#2a3b5c]">
              Joinville le Pont
              <svg className="h-[7px] w-[11px]" viewBox="0 0 11 7">
                <path d="M0 0H11L7 6Q5.500 8 4 6Z" fill="#2a3b5c" />
              </svg>
            </button>
          </div>
          <div className="flex-1 bg-[#f8faff]" />
        </header>

        <div className="flex flex-col pl-[42px]">
          <div className="flex h-[115px] w-[1287px] justify-between">
            <div className="pt-[32px]">
              <h1 className="origin-left scale-x-[0.94] whitespace-nowrap font-['Noto_Sans',sans-serif] text-[34px] leading-[44px] text-[#2a3b5c]">Gestions des points d’accès</h1>
              <p className="origin-left scale-x-[0.9] pl-px font-['Noto_Sans',sans-serif] text-[14px] leading-5 text-[#90a5d0]">4 points d’accès</p>
            </div>
            <div className="mr-[14px] flex gap-[22px] pt-[43px] text-[16px] font-bold tracking-[-0.1px] text-white">
              <button className="flex h-[46px] w-[248px] items-center rounded-full bg-[#8491b0] pl-[25px] pt-[2px]">
                <Plus />
                <span className="ml-3">Ajouter un Point d’accès</span>
              </button>
              <button className="flex h-[46px] w-[196px] items-center rounded-full bg-[#8491b0] pl-[18px] pt-[2px]">
                <Plus />
                <span className="ml-[15px]">Ajouter un véhicule</span>
              </button>
            </div>
          </div>

          <div className="relative ml-px h-[495px] w-[1286px] border border-[#d5d9e6]">
            <div className="h-full overflow-hidden">
              <MapCanvas />
            </div>
            <VehiclePopup />
            <Hand className="absolute left-[725px] top-[126px] h-[22px] w-[17px]" />
          </div>

          <div className="mt-[10px] flex h-9 w-[1287px] justify-end text-[15px] tracking-[0.42px] text-[#8f9cba] [-webkit-text-stroke:0.3px]">
            {LEGEND.map((l) => (
              <div key={l.label} className={`flex items-center border-[#d7dce6] pb-[1px] ${l.className}`}>
                <span className={`mb-px mr-[10px] h-[15px] w-[15px] shrink-0 rounded-full ${l.dot}`} />
                <span className="whitespace-nowrap">{l.label}</span>
              </div>
            ))}
          </div>

          <VehicleTable />
        </div>
      </main>
    </div>
  );
}
